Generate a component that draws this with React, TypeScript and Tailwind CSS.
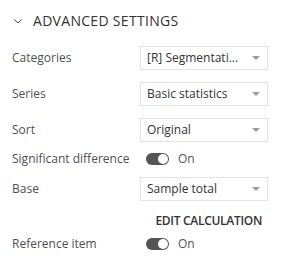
import React from "react";

function Select({ value }: { value: string }) {
  return (
    <div className="flex h-[24px] w-[128px] items-center justify-between border border-[#e3e3e3] bg-white pl-[6px] pr-[7px]">
      <span className="truncate text-[12px] text-[#333]">{value}</span>
      <svg width="8" height="4" viewBox="0 0 8 4" className="ml-2 shrink-0">
        <path d="M0 0 L8 0 L4 4 Z" fill="#999" />
      </svg>
    </div>
  );
}

function Toggle() {
  return (
    <div className="flex items-center">
      <div className="relative h-[12px] w-[23px] rounded-full bg-[#555]">
        <div className="absolute right-[1px] top-[1px] h-[10px] w-[10px] rounded-full bg-white" />
      </div>
      <span className="ml-[9px] text-[12px] text-[#555]">On</span>
    </div>
  );
}

function Row({ label, children, h = "h-[24px]", mt }: { label: string; children: React.ReactNode; h?: string; mt: string }) {
  return (
    <div className={`flex items-center ${h} ${mt}`}>
      <div className="w-[128px] shrink-0 text-[12px] text-[#505050]">{label}</div>
      {children}
    </div>
  );
}

export default function App() {
  return (
    <div
      className="h-[260px] w-[287px] bg-white"
      style={{ fontFamily: '"Open Sans", sans-serif' }}
    >
      <div className="flex items-center pl-[14px] pt-[12px]">
        <svg width="8" height="5" viewBox="0 0 8 5">
          <path d="M0.5 0.5 L4 4 L7.5 0.5" fill="none" stroke="#444" strokeWidth="1" />
        </svg>
        <span className="ml-[11px] text-[14px] leading-[18px] tracking-[0.3px] text-[#333]">ADVANCED SETTINGS</span>
      </div>
      <div className="flex flex-col pl-[12px]">
        <Row label="Categories" mt="mt-[16px]">
          <Select value="[R] Segmentati..." />
        </Row>
        <Row label="Series" mt="mt-[12px]">
          <Select value="Basic statistics" />
        </Row>
        <Row label="Sort" mt="mt-[12px]">
          <Select value="Original" />
        </Row>
        <Row label="Significant difference" h="h-[18px]" mt="mt-[8px]">
          <div className="pl-[6px]"><Toggle /></div>
        </Row>
        <Row label="Base" mt="mt-[9px]">
          <Select value="Sample total" />
        </Row>
        <div className="mt-[11px] flex h-[18px] items-center justify-end pr-[25px]">
          <span className="text-[12px] font-semibold tracking-[-0.3px] text-[#333]">EDIT CALCULATION</span>
        </div>
        <Row label="Reference item" h="h-[18px]" mt="mt-[5px]">
          <div className="pl-[6px]"><Toggle /></div>
        </Row>
      </div>
    </div>
  );
}
